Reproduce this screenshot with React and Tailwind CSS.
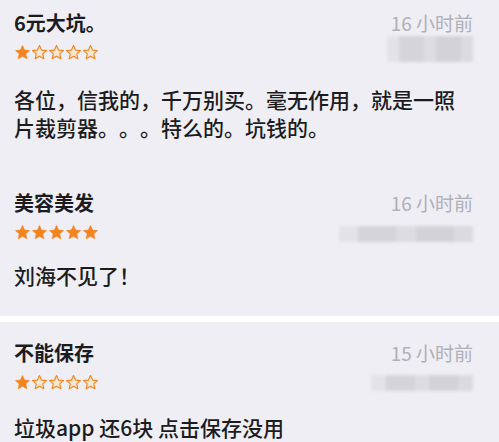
import React from 'react';

const ORANGE = '#f5841f';

const Star = ({ filled }) => (
  <svg width="17" height="17" viewBox="0 0 24 24" className="shrink-0">
    <path
      d="M12 2.2l2.9 6.4 6.9.7-5.2 4.6 1.5 6.9L12 17.3l-6.1 3.5 1.5-6.9-5.2-4.6 6.9-.7z"
      fill={filled ? ORANGE : '#fbe7cf'}
      stroke={ORANGE}
      strokeWidth={filled ? 1 : 1.6}
      strokeLinejoin="round"
    />
  </svg>
);

const Stars = ({ count }) => (
  <div className="flex">
    {[0, 1, 2, 3, 4].map((i) => (
      <Star key={i} filled={i < count} />
    ))}
  </div>
);

// blurred username placeholder
const Blur = ({ className }) => (
  <div className={`flex blur-[1.5px] ${className}`}>
    <div className="flex-1 bg-[#e2e2e8]" />
    <div className="flex-[2] bg-[#d4d4da]" />
    <div className="flex-1 bg-[#dcdce2]" />
    <div className="flex-[2] bg-[#d2d2d8]" />
    <div className="flex-1 bg-[#dadae0]" />
  </div>
);

const Review = ({ title, time, stars, body, blurClass, starsMt, bodyMt, className }) => (
  <div className={`pl-[14px] pr-[26px] ${className}`}>
    <div className="flex justify-between">
      <div className="flex flex-col">
        <div className="text-[20px] leading-[24px] font-bold text-[#1c1c1e]">{title}</div>
        <div className={starsMt}>
          <Stars count={stars} />
        </div>
      </div>
      <div className="flex flex-col items-end">
        <div className="text-[19px] leading-[24px] text-[#b0b0b8]">{time}</div>
        <Blur className={blurClass} />
      </div>
    </div>
    <p className={`w-[450px] text-[21px] leading-[28px] font-medium text-[#1c1c1e] [text-spacing-trim:space-all] ${bodyMt}`}>
      {body}
    </p>
  </div>
);

export default function App() {
  return (
    <div
      className="w-[499px] h-[442px] overflow-hidden bg-[#eeeef4] [text-spacing-trim:space-all]"
      style={{ fontFamily: '"Noto Sans CJK SC", "Noto Sans", sans-serif' }}
    >
      <Review
        className="pt-[11px] pb-[50px]"
        title="6元大坑。"
        time="16 小时前"
        stars={1}
        starsMt="mt-[9px]"
        bodyMt="mt-[23px]"
        blurClass="w-[86px] h-[26px] mt-[1px]"
        body="各位，信我的，千万别买。毫无作用，就是一照片裁剪器。。。特么的。坑钱的。"
      />
      <Review
        className="pb-[27px]"
        title="美容美发"
        time="16 小时前"
        stars={5}
        starsMt="mt-[9px]"
        bodyMt="mt-[19px]"
        blurClass="w-[134px] h-[16px] mt-[11px]"
        body="刘海不见了！"
      />
      <div className="h-[6px] bg-white" />
      <Review
        className="pt-[19px]"
        title="不能保存"
        time="15 小时前"
        stars={1}
        starsMt="mt-[9px]"
        bodyMt="mt-[22px]"
        blurClass="w-[102px] h-[16px] mt-[10px]"
        body="垃圾app 还6块 点击保存没用"
      />
    </div>
  );
}
